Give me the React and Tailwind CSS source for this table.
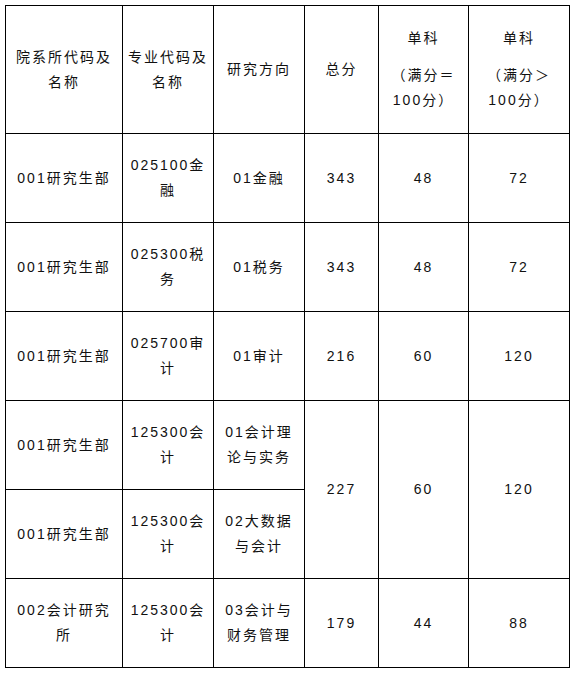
const COLS = [117, 91, 91, 74, 90, 101]

const ROWS = [
  { dept: ['001研究生部'], major: ['025100金', '融'], dir: ['01金融'], total: '343', a: '48', b: '72' },
  { dept: ['001研究生部'], major: ['025300税', '务'], dir: ['01税务'], total: '343', a: '48', b: '72' },
  { dept: ['001研究生部'], major: ['025700审', '计'], dir: ['01审计'], total: '216', a: '60', b: '120' },
  { dept: ['001研究生部'], major: ['125300会', '计'], dir: ['01会计理', '论与实务'], total: '227', a: '60', b: '120', span: 2 },
  { dept: ['001研究生部'], major: ['125300会', '计'], dir: ['02大数据', '与会计'], skip: true },
  { dept: ['002会计研究', '所'], major: ['125300会', '计'], dir: ['03会计与', '财务管理'], total: '179', a: '44', b: '88' },
]

const cell = 'border border-black text-center align-middle p-0 whitespace-nowrap'

function Lines({ lines }) {
  return lines.map((l, i) => <div key={i}>{l}</div>)
}

export default function App() {
  return (
    <div className="bg-white w-[576px] h-[676px] pt-[5px] pl-[5px]"
      style={{ fontFamily: '"Liberation Sans", "Noto Sans CJK SC", sans-serif' }}>
      <table className="table-fixed border-collapse w-[565px] text-[14px] leading-[25px] tracking-[2px] text-[#111]">
        <colgroup>
          {COLS.map((w, i) => <col key={i} style={{ width: w }} />)}
        </colgroup>
        <tbody>
          <tr className="h-[128px]">
            <td className={cell}><Lines lines={['院系所代码及', '名称']} /></td>
            <td className={cell}><Lines lines={['专业代码及', '名称']} /></td>
            <td className={cell}>研究方向</td>
            <td className={cell}>总分</td>
            <td className={cell}>
              <div>单科</div>
              <div className="mt-[12px]">（满分＝<br />100分）</div>
            </td>
            <td className={cell}>
              <div>单科</div>
              <div className="mt-[12px]">（满分＞<br />100分）</div>
            </td>
          </tr>
          {ROWS.map((r, i) => (
            <tr key={i} className="h-[89px]">
              <td className={cell}><Lines lines={r.dept} /></td>
              <td className={cell}><Lines lines={r.major} /></td>
              <td className={cell}><Lines lines={r.dir} /></td>
              {!r.skip && (
                <>
                  <td className={cell} rowSpan={r.span || 1}>{r.total}</td>
                  <td className={cell} rowSpan={r.span || 1}>{r.a}</td>
                  <td className={cell} rowSpan={r.span || 1}>{r.b}</td>
                </>
              )}
            </tr>
          ))}
        </tbody>
      </table>
    </div>
  )
}
